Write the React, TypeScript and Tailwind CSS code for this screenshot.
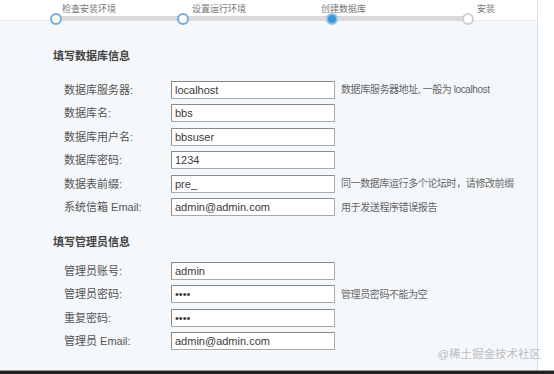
import React from 'react';

interface Field {
  label: string;
  value: string;
  hint?: string;
}

const dbFields: Field[] = [
  { label: '数据库服务器:', value: 'localhost', hint: '数据库服务器地址, 一般为 localhost' },
  { label: '数据库名:', value: 'bbs' },
  { label: '数据库用户名:', value: 'bbsuser' },
  { label: '数据库密码:', value: '1234' },
  { label: '数据表前缀:', value: 'pre_', hint: '同一数据库运行多个论坛时，请修改前缀' },
  { label: '系统信箱 Email:', value: 'admin@admin.com', hint: '用于发送程序错误报告' },
];

const adminFields: Field[] = [
  { label: '管理员账号:', value: 'admin' },
  { label: '管理员密码:', value: '••••', hint: '管理员密码不能为空' },
  { label: '重复密码:', value: '••••' },
  { label: '管理员 Email:', value: 'admin@admin.com' },
];

const steps = [
  { label: '检查安装环境', x: 50, lx: 62, state: 'done' },
  { label: '设置运行环境', x: 177, lx: 192, state: 'done' },
  { label: '创建数据库', x: 326, lx: 321, state: 'current' },
  { label: '安装', x: 462, lx: 477, state: 'todo' },
];

function Row({ field }: { field: Field }) {
  return (
    <div className="flex items-center h-[23.5px]">
      <div className="w-[171px] shrink-0 pl-[64px] whitespace-nowrap text-[11px] text-[#555]">{field.label}</div>
      <div className="w-[164px] h-[18px] bg-white border border-[#a9a9a9] border-t-[#8a8a8a] border-l-[#8a8a8a] rounded-[1px] flex items-center px-[3px] text-[11px] text-[#3a3a3a] shrink-0">
        {field.value}
      </div>
      {field.hint && (
        <div className="ml-[6px] whitespace-nowrap text-[10px] tracking-[-0.4px] text-[#666]">{field.hint}</div>
      )}
    </div>
  );
}

export default function App() {
  return (
    <div
      className="relative w-[554px] h-[374px] bg-white overflow-hidden"
      style={{ fontFamily: '"Liberation Sans", "Noto Sans CJK SC", sans-serif' }}
    >
      <div className="w-[538px] h-[370px] border-r border-[#d5e2ee] flex flex-col">
        {/* 步骤条 */}
        <div className="relative h-[21px] bg-white border-b border-[#e2e8ee] shrink-0">
          <div className="absolute left-[58px] w-[408px] top-[16px] h-[5px] bg-[#dadada]" />
          {steps.map((s) => (
            <React.Fragment key={s.label}>
              <span
                className="absolute top-[3px] text-[9px] leading-[12px] text-[#777] whitespace-nowrap"
                style={{ left: s.lx }}
              >
                {s.label}
              </span>
              <span
                className={
                  s.state === 'current'
                    ? 'absolute top-[13px] w-[12px] h-[12px] rounded-full border-2 border-[#8cc3ea] bg-[#3d97dd]'
                    : s.state === 'done'
                    ? 'absolute top-[13px] w-[12px] h-[12px] rounded-full border-2 border-[#6daee3] bg-white'
                    : 'absolute top-[13px] w-[12px] h-[12px] rounded-full border-2 border-[#cfcfcf] bg-white'
                }
                style={{ left: s.x }}
              />
            </React.Fragment>
          ))}
        </div>

        <div className="flex-1 bg-[#f4f8fb] pt-[28px]">
          <div className="pl-[53px] text-[11px] font-bold text-[#444] h-[14px] leading-[14px]">填写数据库信息</div>
          <div className="mt-[15px]">
            {dbFields.map((f) => (
              <Row key={f.label} field={f} />
            ))}
          </div>
          <div className="pl-[53px] mt-[16px] text-[11px] font-bold text-[#444] h-[14px] leading-[14px]">填写管理员信息</div>
          <div className="mt-[10px]">
            {adminFields.map((f) => (
              <Row key={f.label} field={f} />
            ))}
          </div>
        </div>
      </div>
      <div className="absolute right-[13px] top-[346px] text-[11.5px] text-[#bdbdbd] whitespace-nowrap">@稀土掘金技术社区</div>
      <div className="h-[1px] bg-[#9a9a9a]" />
      <div className="h-[3px] bg-[#222]" />
    </div>
  );
}
